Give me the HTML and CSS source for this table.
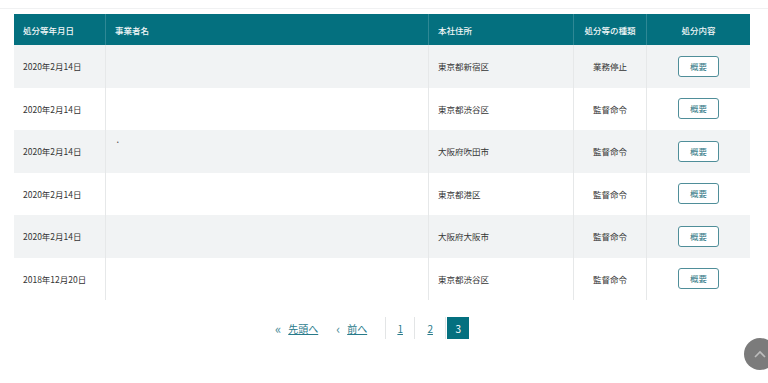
FILE: index.html
```html
<!DOCTYPE html>
<html lang="ja">
<head>
<meta charset="utf-8">
<link rel="stylesheet" href="styles.css">
</head>
<body>
<div class="topline"></div>
<div class="wrap">
<table class="list">
<thead>
<tr>
<th class="c-date">処分等年月日</th>
<th class="c-name">事業者名</th>
<th class="c-addr">本社住所</th>
<th class="c-type center">処分等の種類</th>
<th class="c-cont center">処分内容</th>
</tr>
</thead>
<tbody>
<tr><td>2020年2月14日</td><td></td><td>東京都新宿区</td><td class="center">業務停止</td><td class="center"><a class="btn">概要</a></td></tr>
<tr><td>2020年2月14日</td><td></td><td>東京都渋谷区</td><td class="center">監督命令</td><td class="center"><a class="btn">概要</a></td></tr>
<tr><td>2020年2月14日</td><td class="dotcell"><span class="dot">·</span></td><td>大阪府吹田市</td><td class="center">監督命令</td><td class="center"><a class="btn">概要</a></td></tr>
<tr><td>2020年2月14日</td><td></td><td>東京都港区</td><td class="center">監督命令</td><td class="center"><a class="btn">概要</a></td></tr>
<tr><td>2020年2月14日</td><td></td><td>大阪府大阪市</td><td class="center">監督命令</td><td class="center"><a class="btn">概要</a></td></tr>
<tr><td>2018年12月20日</td><td></td><td>東京都渋谷区</td><td class="center">監督命令</td><td class="center"><a class="btn">概要</a></td></tr>
</tbody>
</table>
<nav class="pager">
<a class="nav-link first"><span class="arr">«</span><span class="u">先頭へ</span></a>
<a class="nav-link prev"><span class="arr">‹</span><span class="u">前へ</span></a>
<ul class="pages">
<li><a class="u">1</a></li>
<li><a class="u">2</a></li>
<li class="current"><span>3</span></li>
</ul>
</nav>
</div>
<a class="totop"><svg width="14" height="10" viewBox="0 0 14 10"><path d="M2 8 L7 3 L12 8" fill="none" stroke="#bdbdbd" stroke-width="1.6"/></svg></a>
</body>
</html>
```
FILE: styles.css
```css
html, body { margin: 0; padding: 0; background: #fff; }
body {
  font-family: "Noto Sans CJK JP", "Noto Sans", sans-serif;
  font-size: 8.5px;
  color: #333;
  width: 768px;
  height: 383px;
  overflow: hidden;
  position: relative;
}
.topline { height: 8px; border-bottom: 1px solid #f0f1f2; }
.wrap { padding: 5px 18px 0 14px; }
.list {
  width: 736px;
  border-collapse: collapse;
  table-layout: fixed;
}
.list th {
  background: #04707f;
  color: #f2f7f8;
  font-weight: 500;
  height: 31px;
  padding: 0 0 0 9px;
  text-align: left;
  border-left: 1px solid #2f8895;
}
.list th:first-child { border-left: none; }
.c-date { width: 82px; }
.c-name { width: 313px; }
.c-addr { width: 135px; }
.c-type { width: 72px; }
.list th.center, .list td.center { text-align: center; padding-left: 0; }
.list td {
  height: 42.5px;
  padding: 0 0 0 9px;
  border-left: 1px solid #e6e8e9;
  vertical-align: middle;
  box-sizing: border-box;
}
.list td:first-child { border-left: none; }
.list tbody tr:nth-child(odd) td { background: #f1f3f4; }
.list td.dotcell { vertical-align: top; }
.dot { display: block; padding-top: 4px; font-size: 10px; color: #555; }
.btn {
  display: inline-block;
  width: 39px;
  height: 19px;
  line-height: 19px;
  border: 1px solid #4f8e99;
  border-radius: 3px;
  background: #fff;
  color: #2d7584;
  font-size: 8.5px;
  text-align: center;
}
.pager {
  display: flex;
  align-items: center;
  margin: 17px 0 0 261px;
  font-size: 10px;
  color: #287a8a;
}
.nav-link { display: flex; align-items: center; }
.nav-link.first { margin-right: 18px; }
.nav-link.prev { margin-right: 18px; }
.arr { font-size: 13px; margin-right: 7px; color: #4b8d99; line-height: 1; }
.u { text-decoration: underline; color: #287a8a; }
.pages { list-style: none; margin: 0; padding: 0; display: flex; }
.pages li {
  border-left: 1px solid #e3e5e6;
  height: 22px;
  width: 28px;
  display: flex;
  align-items: center;
  justify-content: center;
}
.pages li:nth-child(2) { width: 30px; }
.pages li.current { width: auto; padding-left: 1px; }
.pages li.current span {
  display: flex;
  align-items: center;
  justify-content: center;
  width: 22px;
  height: 22px;
  background: #04707f;
  color: #fff;
}
.totop {
  position: absolute;
  left: 744px;
  top: 338px;
  width: 32px;
  height: 32px;
  border-radius: 50%;
  background: #7b7b7b;
  display: flex;
  align-items: center;
  justify-content: center;
}
```
